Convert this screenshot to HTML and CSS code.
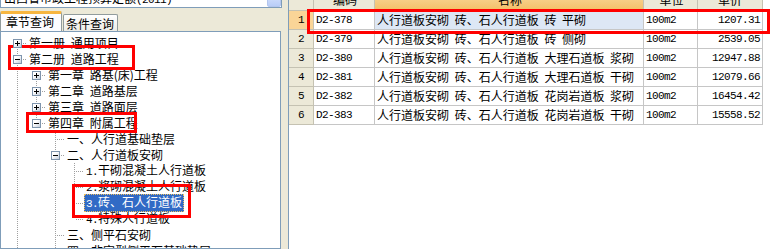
FILE: index.html
```html
<!DOCTYPE html>
<html lang="zh-CN">
<head>
    <meta charset="UTF-8">
    <title>定额查询</title>
    <link rel="stylesheet" href="styles.css">
</head>
<body>
    <div class="app">
        <div class="left">
            <div class="combo">
                <span class="combo-text">山西省市政工程预算定额<span class="n">(2011)</span></span>
                <span class="combo-btn"></span>
            </div>
            <div class="tabs">
                <div class="tab active">章节查询</div>
                <div class="tab">条件查询</div>
            </div>
            <div class="tree">
                <div class="tr"><span class="c first"><span class="box plus"></span></span><span class="lb">第一册 通用项目</span></div>
                <div class="tr"><span class="c"><span class="box"></span></span><span class="lb">第二册 道路工程</span></div>
                <div class="tr"><span class="g l"></span><span class="c"><span class="box plus"></span></span><span class="lb">第一章 路基(床)工程</span></div>
                <div class="tr"><span class="g l"></span><span class="c"><span class="box plus"></span></span><span class="lb">第二章 道路基层</span></div>
                <div class="tr"><span class="g l"></span><span class="c"><span class="box plus"></span></span><span class="lb">第三章 道路面层</span></div>
                <div class="tr"><span class="g l"></span><span class="c end"><span class="box"></span></span><span class="lb">第四章 附属工程</span></div>
                <div class="tr"><span class="g l"></span><span class="g"></span><span class="c"></span><span class="lb">一、人行道基础垫层</span></div>
                <div class="tr"><span class="g l"></span><span class="g"></span><span class="c"><span class="box"></span></span><span class="lb">二、人行道板安砌</span></div>
                <div class="tr"><span class="g l"></span><span class="g"></span><span class="g l"></span><span class="c"></span><span class="lb"><span class="n">1.</span>干砌混凝土人行道板</span></div>
                <div class="tr"><span class="g l"></span><span class="g"></span><span class="g l"></span><span class="c"></span><span class="lb"><span class="n">2.</span>浆砌混凝土人行道板</span></div>
                <div class="tr"><span class="g l"></span><span class="g"></span><span class="g l"></span><span class="c"></span><span class="lb sel"><span class="n">3.</span>砖、石人行道板</span></div>
                <div class="tr"><span class="g l"></span><span class="g"></span><span class="g l"></span><span class="c end"></span><span class="lb"><span class="n">4.</span>特殊人行道板</span></div>
                <div class="tr"><span class="g l"></span><span class="g"></span><span class="c"></span><span class="lb">三、侧平石安砌</span></div>
                <div class="tr"><span class="g l"></span><span class="g"></span><span class="c"></span><span class="lb">四、非定型侧平石基础垫层</span></div>
            </div>
        </div>
        <div class="split"></div>
        <div class="grid">
            <div class="ghead">
                <div class="cell rh"></div>
                <div class="cell code">编码</div>
                <div class="cell name sorted">名称</div>
                <div class="cell unit">单位</div>
                <div class="cell price">单价</div>
            </div>
            <div class="row current">
                <div class="cell rh n">1</div>
                <div class="cell code n">D2-378</div>
                <div class="cell name">人行道板安砌 砖、石人行道板 砖 平砌</div>
                <div class="cell unit n">100m2</div>
                <div class="cell price n">1207.31</div>
            </div>
            <div class="row">
                <div class="cell rh n">2</div>
                <div class="cell code n">D2-379</div>
                <div class="cell name">人行道板安砌 砖、石人行道板 砖 侧砌</div>
                <div class="cell unit n">100m2</div>
                <div class="cell price n">2539.05</div>
            </div>
            <div class="row">
                <div class="cell rh n">3</div>
                <div class="cell code n">D2-380</div>
                <div class="cell name">人行道板安砌 砖、石人行道板 大理石道板 浆砌</div>
                <div class="cell unit n">100m2</div>
                <div class="cell price n">12947.88</div>
            </div>
            <div class="row">
                <div class="cell rh n">4</div>
                <div class="cell code n">D2-381</div>
                <div class="cell name">人行道板安砌 砖、石人行道板 大理石道板 干砌</div>
                <div class="cell unit n">100m2</div>
                <div class="cell price n">12079.66</div>
            </div>
            <div class="row">
                <div class="cell rh n">5</div>
                <div class="cell code n">D2-382</div>
                <div class="cell name">人行道板安砌 砖、石人行道板 花岗岩道板 浆砌</div>
                <div class="cell unit n">100m2</div>
                <div class="cell price n">16454.42</div>
            </div>
            <div class="row">
                <div class="cell rh n">6</div>
                <div class="cell code n">D2-383</div>
                <div class="cell name">人行道板安砌 砖、石人行道板 花岗岩道板 干砌</div>
                <div class="cell unit n">100m2</div>
                <div class="cell price n">15558.52</div>
            </div>
        </div>
    </div>

    <!-- red markup boxes drawn over the screenshot -->
    <div class="mark mark-book"></div>
    <div class="mark mark-chapter"></div>
    <div class="mark mark-item"></div>
    <div class="mark mark-row"></div>
</body>
</html>
```

FILE: styles.css
```css
body {
    margin: 0;
    width: 784px;
    height: 249px;
    overflow: hidden;
    position: relative;
    background-color: #ece9d8;
    font-family: "Noto Sans CJK SC", sans-serif;
    font-size: 12px;
    color: #000;
    word-spacing: 3px;
}

.n {
    font-family: "Liberation Mono", "Noto Sans CJK SC", monospace;
    font-size: 11px;
    letter-spacing: -0.6px;
    word-spacing: 0;
}

.app {
    display: flex;
    height: 249px;
}

/* left panel */
.left {
    width: 282px;
    display: flex;
    flex-direction: column;
}

.combo {
    margin-top: -12px;
    height: 20px;
    box-sizing: border-box;
    border: 1px solid #7f9db9;
    background-color: #fff;
    display: flex;
}

.combo-text {
    flex: 1;
    padding-left: 3px;
    line-height: 18px;
    white-space: nowrap;
}

.combo-btn {
    width: 14px;
    box-sizing: border-box;
    border: 1px solid #b4c6ee;
    border-radius: 2px;
    background: linear-gradient(#e2ebfe, #b9cdf8);
}

.tabs {
    height: 23px;
    display: flex;
    align-items: flex-end;
}

.tab {
    width: 55px;
    height: 17px;
    box-sizing: border-box;
    margin-left: 1px;
    padding-left: 2px;
    border: 1px solid #919b9c;
    border-bottom: none;
    border-radius: 2px 2px 0 0;
    background: linear-gradient(#ffffff, #ecebe5);
    line-height: 17px;
    white-space: nowrap;
}

.tab.active {
    width: 62px;
    height: 20px;
    margin-left: 0;
    padding-left: 5px;
    border-top: 3px solid #f7b640;
    background: #fcfcfe;
    line-height: 16px;
}

.tree {
    flex: 1;
    border: 1px solid #7f9db9;
    margin-right: 1px;
    background-color: #fff;
    padding: 3px 0 0 7px;
    overflow: hidden;
}

.tr {
    display: flex;
    height: 16px;
    align-items: center;
    white-space: nowrap;
}

.g, .c {
    width: 19px;
    height: 16px;
    flex: none;
    position: relative;
}

.g.l::before, .c::before {
    content: "";
    position: absolute;
    left: 9px;
    top: 0;
    bottom: 0;
    width: 1px;
    background: repeating-linear-gradient(#a0a0a0 0 1px, transparent 1px 2px);
}

.c.first::before {
    top: 8px;
}

.c.end::before {
    bottom: 8px;
}

.c::after {
    content: "";
    position: absolute;
    left: 10px;
    top: 8px;
    width: 9px;
    height: 1px;
    background: repeating-linear-gradient(to right, transparent 0 1px, #a0a0a0 1px 2px);
}

.box {
    position: absolute;
    left: 5px;
    top: 4px;
    width: 9px;
    height: 9px;
    box-sizing: border-box;
    border: 1px solid #7f95ad;
    background: linear-gradient(135deg, #ffffff 35%, #c5cfdc);
    z-index: 1;
}

.box::before {
    content: "";
    position: absolute;
    left: 1px;
    top: 3px;
    width: 5px;
    height: 1px;
    background-color: #000;
}

.box.plus::after {
    content: "";
    position: absolute;
    left: 3px;
    top: 1px;
    width: 1px;
    height: 5px;
    background-color: #000;
}

.lb {
    padding: 0 1px;
    border: 1px solid transparent;
    line-height: 14px;
}

.lb .n {
    font-size: 11px;
}

.lb.sel {
    background-color: #316ac5;
    color: #fff;
    border: 1px dotted #f0c060;
}

.split {
    width: 6px;
}

/* grid */
.grid {
    flex: 1;
    background-color: #fff;
    border-left: 1px solid #7f9db9;
}

.ghead, .row {
    display: flex;
}

.ghead {
    height: 22px;
    margin-top: -11px;
}

.row {
    height: 19px;
}

.cell {
    box-sizing: border-box;
    height: 100%;
    border-right: 1px solid #c6c6c6;
    border-bottom: 1px solid #c6c6c6;
    padding-left: 2px;
    line-height: 18px;
    white-space: nowrap;
    overflow: hidden;
}

.rh {
    width: 25px;
    padding-left: 0;
    text-align: center;
    background-color: #ece9d8;
    border-color: #c5c2b2;
}

.code {
    width: 61px;
}

.name {
    width: 269px;
}

.unit {
    width: 54px;
}

.price {
    width: 65px;
    text-align: right;
    padding-right: 2px;
}

.ghead .cell {
    line-height: 21px;
    text-align: center;
    background-color: #ece9d8;
    border-color: #c5c2b2;
}

.ghead .sorted {
    background: linear-gradient(#fbdea8, #f3bf68);
}

.row.current .rh {
    background-color: #fad597;
}

.row.current .name {
    background-color: #dde7f5;
}

/* annotation boxes */
.mark {
    position: absolute;
    box-sizing: border-box;
    border: 3px solid #ff0000;
}

.mark-book {
    left: 8px;
    top: 45px;
    width: 127px;
    height: 25px;
}

.mark-chapter {
    left: 26px;
    top: 112px;
    width: 111px;
    height: 21px;
}

.mark-item {
    left: 72px;
    top: 184px;
    width: 119px;
    height: 34px;
}

.mark-row {
    left: 307px;
    top: 9px;
    width: 463px;
    height: 25px;
}
```
